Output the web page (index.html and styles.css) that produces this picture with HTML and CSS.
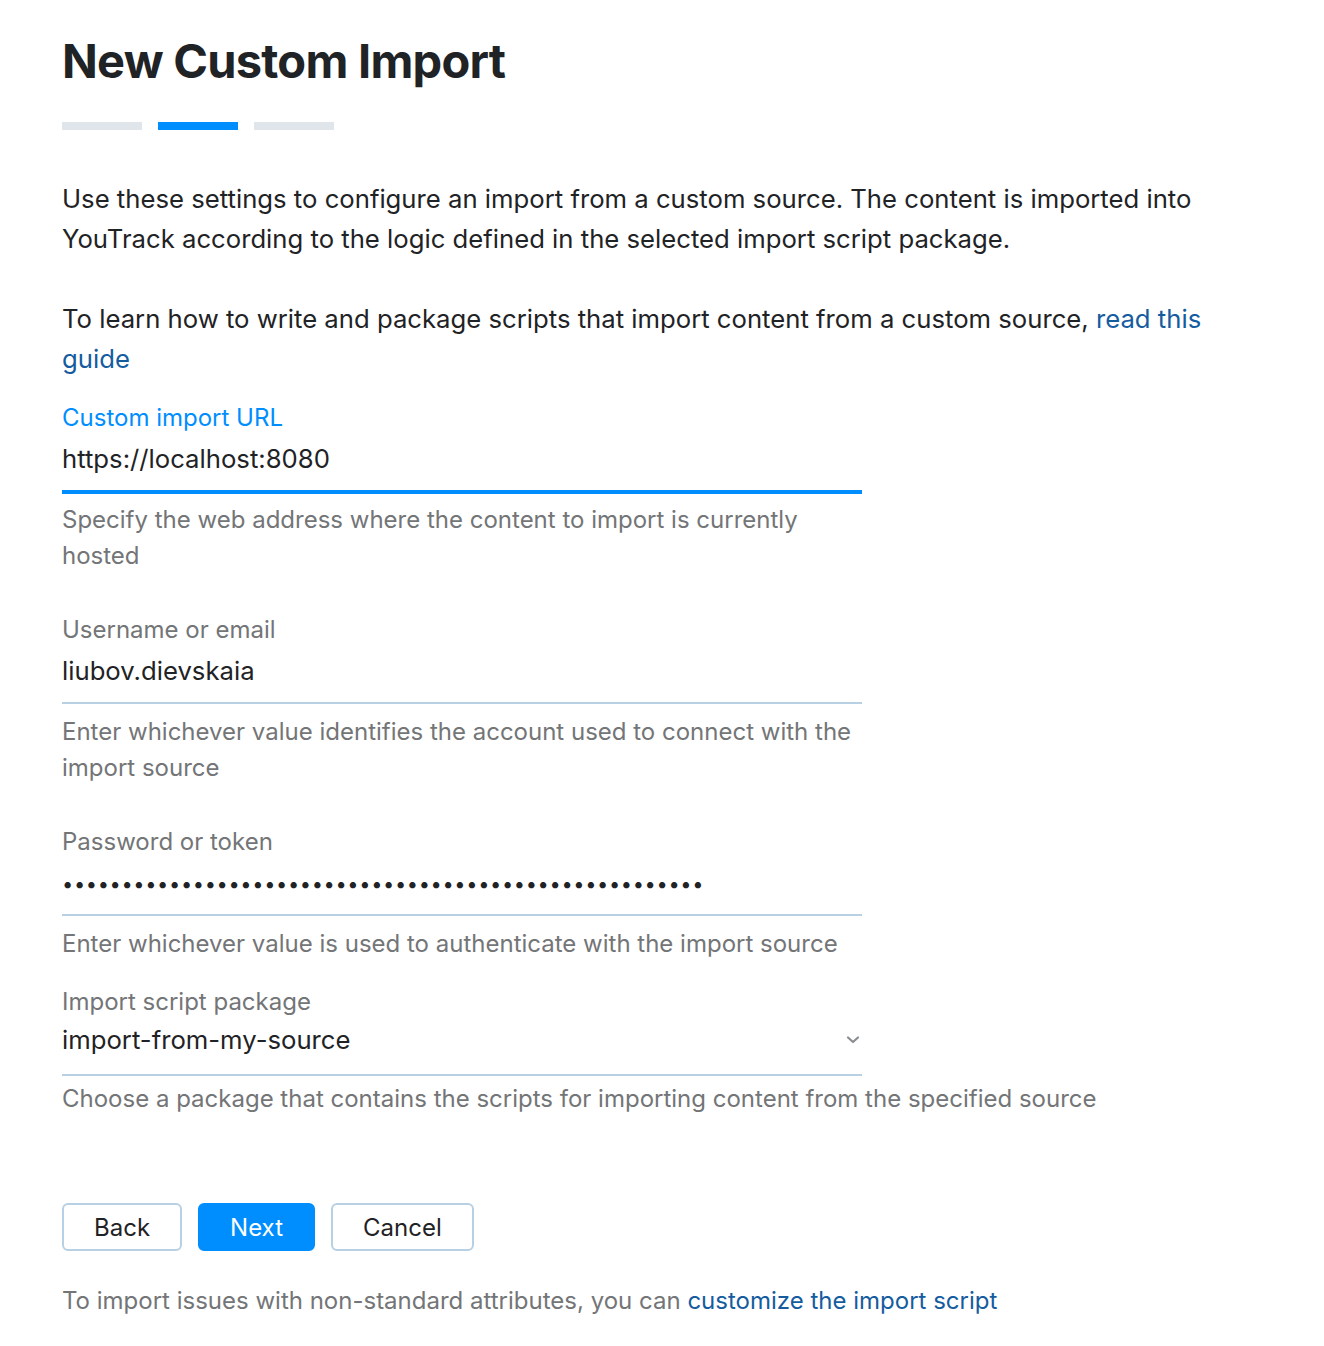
FILE: index.html
```html
<!DOCTYPE html>
<html lang="en">
<head>
<meta charset="utf-8">
<title>New Custom Import</title>
<link rel="stylesheet" href="styles.css">
</head>
<body>
<main class="page">
  <h1 class="title">New Custom Import</h1>
  <div class="steps">
    <span class="step"></span>
    <span class="step step-active"></span>
    <span class="step"></span>
  </div>

  <p class="text">Use these settings to configure an import from a custom source. The content is imported into YouTrack according to the logic defined in the selected import script package.</p>
  <p class="text text-gap">To learn how to write and package scripts that import content from a custom source, <a class="link" href="#">read this guide</a></p>

  <div class="field field-first">
    <div class="label label-focus">Custom import URL</div>
    <div class="input input-focus">https://localhost:8080</div>
    <div class="help">Specify the web address where the content to import is currently hosted</div>
  </div>

  <div class="field field-user">
    <div class="label">Username or email</div>
    <div class="input">liubov.dievskaia</div>
    <div class="help">Enter whichever value identifies the account used to connect with the import source</div>
  </div>

  <div class="field field-pass">
    <div class="label">Password or token</div>
    <div class="input input-pass"><span class="dots">••••••••••••••••••••••••••••••••••••••••••••••••••••••</span></div>
    <div class="help">Enter whichever value is used to authenticate with the import source</div>
  </div>

  <div class="field field-select">
    <div class="label">Import script package</div>
    <div class="input select">
      <span>import-from-my-source</span>
      <svg class="chevron" width="14" height="10" viewBox="0 0 14 10"><path d="M2 2.5 L7 7 L12 2.5" fill="none" stroke="#8a8d91" stroke-width="2.2" stroke-linecap="round" stroke-linejoin="round"/></svg>
    </div>
    <div class="help help-select">Choose a package that contains the scripts for importing content from the specified source</div>
  </div>

  <div class="buttons">
    <button class="btn">Back</button>
    <button class="btn btn-primary">Next</button>
    <button class="btn">Cancel</button>
  </div>

  <p class="footer">To import issues with non-standard attributes, you can <a class="link" href="#">customize the import script</a></p>
</main>
</body>
</html>
```

FILE: styles.css
```css
* { box-sizing: border-box; }
html, body { margin: 0; padding: 0; background: #fff; }
body {
  font-family: Inter, "Noto Sans", "Liberation Sans", sans-serif;
  color: #1f2326;
}
.page {
  padding: 33px 62px 0 62px;
}
.title {
  margin: 0;
  font-size: 47px;
  line-height: 56px;
  font-weight: 700;
  letter-spacing: -0.75px;
  color: #1f2326;
}
.steps {
  display: flex;
  gap: 16px;
  margin-top: 33px;
}
.step {
  width: 80px;
  height: 8px;
  background: #dfe5eb;
}
.step-active { background: #008eff; }

.text {
  margin: 49px 0 0 0;
  font-size: 25.7px;
  line-height: 40px;
  max-width: 1160px;
}
.text-gap { margin-top: 40px; }
.link { color: #155c9f; text-decoration: none; }

.field { width: 800px; margin-top: 39px; }
.field-first { margin-top: 23px; }
.field-user { margin-top: 40px; }
.field-pass { margin-top: 40px; }
.label {
  font-size: 24px;
  line-height: 32px;
  color: #737577;
}
.label-focus { color: #008eff; }
.input {
  height: 58px;
  padding-top: 9px;
  font-size: 25.7px;
  line-height: 32px;
  color: #1f2326;
  border-bottom: 2px solid #b8d0e3;
}
.input-pass { padding-top: 8px; }
.input-focus {
  border-bottom-color: #008eff;
  box-shadow: 0 2px 0 #008eff;
}
.dots { letter-spacing: 0.64px; font-size: 20px; }
.help {
  margin-top: 10px;
  font-size: 24px;
  line-height: 36px;
  color: #737577;
}
.field-select { margin-top: 24px; }
.select {
  display: flex;
  justify-content: space-between;
  align-items: flex-start;
  padding-top: 6px;
  padding-right: 2px;
}
.chevron { margin-top: 11px; }
.help-select { margin-top: 5px; width: 1100px; }

.buttons {
  display: flex;
  gap: 16px;
  margin-top: 86px;
}
.btn {
  height: 48px;
  padding: 0 30px;
  font-family: inherit;
  font-size: 24px;
  color: #1f2326;
  background: #fff;
  border: 2px solid #b8d0e3;
  border-radius: 6px;
}
.btn-primary {
  background: #008eff;
  border-color: #008eff;
  color: #fff;
}
.footer {
  margin: 32px 0 0 0;
  font-size: 24px;
  line-height: 36px;
  color: #737577;
}
```
